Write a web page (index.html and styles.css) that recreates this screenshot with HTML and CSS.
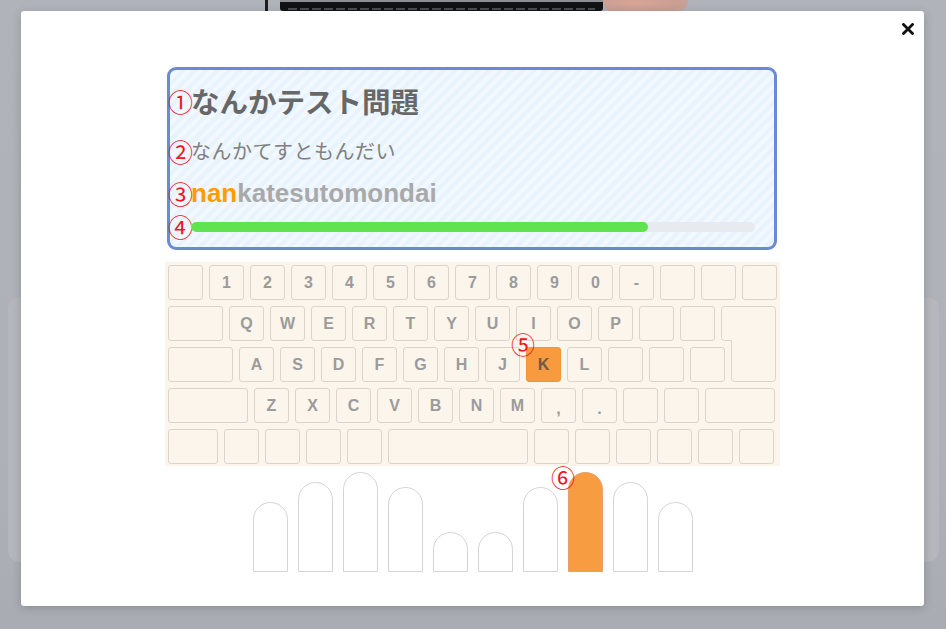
FILE: index.html
```html
<!DOCTYPE html>
<html lang="ja">
<head>
<meta charset="utf-8">
<title>Typing</title>
<link rel="stylesheet" href="styles.css">
</head>
<body>
<div class="page">
  <div class="bg-header">
    <div class="bg-bar"></div>
    <div class="bg-screen"><div class="bg-dashes"></div></div>
    <div class="bg-face"></div>
  </div>
  <div class="bg-card"></div>
</div>

<div class="modal">
  <button class="close" aria-label="close">
    <svg width="12" height="12" viewBox="0 0 12 12"><path d="M1.5 1.5 L10.5 10.5 M10.5 1.5 L1.5 10.5" stroke="#111" stroke-width="2.8" stroke-linecap="square"/></svg>
  </button>

  <div class="prompt">
    <div class="line line-title"><span class="num">①</span><span class="title">なんかテスト問題</span></div>
    <div class="line line-kana"><span class="num">②</span><span class="kana">なんかてすともんだい</span></div>
    <div class="line line-roma"><span class="num">③</span><span class="roma"><span class="done">nan</span>katesutomondai</span></div>
    <div class="line line-bar"><span class="num">④</span><div class="track"><div class="fill" style="width:81%"></div></div></div>
  </div>

  <div class="keyboard">
    <div class="row">
      <div class="key"></div>
      <div class="key">1</div><div class="key">2</div><div class="key">3</div><div class="key">4</div><div class="key">5</div>
      <div class="key">6</div><div class="key">7</div><div class="key">8</div><div class="key">9</div><div class="key">0</div>
      <div class="key">-</div><div class="key"></div><div class="key"></div><div class="key"></div>
    </div>
    <div class="row">
      <div class="key w55"></div>
      <div class="key">Q</div><div class="key">W</div><div class="key">E</div><div class="key">R</div><div class="key">T</div>
      <div class="key">Y</div><div class="key">U</div><div class="key">I</div><div class="key">O</div><div class="key">P</div>
      <div class="key"></div><div class="key"></div>
      <svg class="enter" width="55" height="76" viewBox="0 0 55 76"><path d="M3.5 0.5 H51.5 Q54.5 0.5 54.5 3.5 V72.5 Q54.5 75.5 51.5 75.5 H13.5 Q10.5 75.5 10.5 72.5 V34.5 H3.5 Q0.5 34.5 0.5 31.5 V3.5 Q0.5 0.5 3.5 0.5 Z" fill="#fcf5ec" stroke="#d9d4cd"/></svg>
    </div>
    <div class="row">
      <div class="key w65"></div>
      <div class="key">A</div><div class="key">S</div><div class="key">D</div><div class="key">F</div><div class="key">G</div>
      <div class="key">H</div><div class="key">J</div><div class="key active">K<span class="mark mark-key">⑤</span></div><div class="key">L</div>
      <div class="key"></div><div class="key"></div><div class="key"></div>
      <div class="spacer45"></div>
    </div>
    <div class="row">
      <div class="key w80"></div>
      <div class="key">Z</div><div class="key">X</div><div class="key">C</div><div class="key">V</div><div class="key">B</div>
      <div class="key">N</div><div class="key">M</div><div class="key punct">,</div><div class="key punct">.</div>
      <div class="key"></div><div class="key"></div><div class="key w70"></div>
    </div>
    <div class="row">
      <div class="key w50"></div>
      <div class="key"></div><div class="key"></div><div class="key"></div><div class="key"></div>
      <div class="key w140"></div>
      <div class="key"></div><div class="key"></div><div class="key"></div><div class="key"></div><div class="key"></div><div class="key"></div>
    </div>
  </div>

  <div class="hands">
    <div class="finger h70"></div>
    <div class="finger h90"></div>
    <div class="finger h100"></div>
    <div class="finger h85"></div>
    <div class="finger h40"></div>
    <div class="finger h40"></div>
    <div class="finger h85"></div>
    <div class="finger h100 active"><span class="mark mark-finger">⑥</span></div>
    <div class="finger h90"></div>
    <div class="finger h70"></div>
  </div>
</div>
</body>
</html>
```

FILE: styles.css
```css
* { box-sizing: border-box; }

html, body {
  margin: 0;
  padding: 0;
}

body {
  width: 946px;
  height: 629px;
  overflow: hidden;
  background: linear-gradient(180deg, #b0b3ba 0%, #aeb1b8 70%, #a9acb3 100%);
  font-family: "Noto Sans CJK JP", "Noto Sans", sans-serif;
  position: relative;
}

/* ---------- dimmed page behind the modal ---------- */
.page {
  display: flex;
  flex-direction: column;
}

.bg-header {
  display: flex;
  align-items: flex-start;
  height: 14px;
  margin-left: 265px;
}

.bg-bar {
  width: 3px;
  height: 12px;
  background: #1d1e22;
}

.bg-screen {
  margin-left: 12px;
  width: 323px;
  height: 11px;
  background: #111214;
  border-top: 2px solid #8d8f95;
  border-radius: 0 0 3px 3px;
  padding: 6px 8px 0;
}

.bg-dashes {
  height: 2px;
  background: repeating-linear-gradient(90deg, #4a4c52 0 9px, transparent 9px 12px);
}

.bg-face {
  width: 85px;
  height: 14px;
  border-radius: 0 0 40px 40px;
  background: radial-gradient(ellipse at 40% 20%, #d7a596 0%, #c99e93 60%, #b8aeb0 100%);
}

.bg-card {
  margin: 283px 7px 0 8px;
  height: 265px;
  border-radius: 12px;
  background: #b6b7bc;
}

/* ---------- modal ---------- */
.modal {
  position: absolute;
  left: 21px;
  top: 11px;
  width: 903px;
  height: 595px;
  background: #fff;
  border-radius: 3px;
  box-shadow: 0 2px 10px rgba(0, 0, 0, 0.18);
  display: flex;
  flex-direction: column;
  align-items: center;
  padding-top: 56px;
}

.close {
  position: absolute;
  right: 9px;
  top: 11px;
  width: 14px;
  height: 14px;
  padding: 1px;
  border: 0;
  background: transparent;
  display: flex;
  align-items: center;
  justify-content: center;
}

/* ---------- prompt box ---------- */
.prompt {
  width: 610px;
  height: 183px;
  margin-left: -1px;
  border: 3px solid #6a8ad2;
  border-radius: 9px;
  background-color: #ebf5fe;
  background-image: repeating-linear-gradient(135deg, #e8f3fe 0 4px, #f1f8ff 4px 8px);
  display: flex;
  flex-direction: column;
  padding-left: 1px;
}

.line {
  display: flex;
  align-items: center;
  height: 30px;
}

.line-title { margin-top: 16px; }
.line-kana { margin-top: 20px; }
.line-roma { margin-top: 12px; }
.line-bar { margin-top: 8px; height: 21px; padding-right: 19px; }

.num {
  display: inline-block;
  width: 23px;
  margin-left: -3px;
  flex: none;
  text-align: center;
  font-family: "Noto Sans CJK JP", sans-serif;
  font-size: 25px;
  line-height: 1;
  color: #f0141e;
}

.title {
  font-size: 28.5px;
  font-weight: 700;
  color: #676767;
  line-height: 1;
}

.kana {
  font-size: 20px;
  font-weight: 400;
  color: #808080;
  line-height: 1;
  letter-spacing: 0.5px;
}

.roma {
  font-family: "Liberation Sans", Arial, sans-serif;
  font-size: 26px;
  font-weight: 700;
  color: #a9a9a9;
  line-height: 1;
}

.roma .done { color: #ff9c00; }

.track {
  flex: 1;
  height: 10px;
  border-radius: 5px;
  background: #e7eaef;
  overflow: hidden;
}

.fill {
  height: 100%;
  border-radius: 5px;
  background: #5fe34f;
}

/* ---------- keyboard ---------- */
.keyboard {
  margin-top: 12px;
  width: 615px;
  height: 204px;
  padding: 3px 3px 0 3px;
  background: #fcf5ec;
  display: flex;
  flex-direction: column;
  gap: 6px;
}

.row {
  display: flex;
  gap: 6px;
  height: 35px;
  align-items: flex-start;
}

.key {
  position: relative;
  flex: none;
  width: 35px;
  height: 35px;
  border: 1px solid #d9d4cd;
  border-radius: 3px;
  background: #fcf5ec;
  display: flex;
  align-items: center;
  justify-content: center;
  font-family: "Liberation Sans", Arial, sans-serif;
  font-weight: 700;
  font-size: 16px;
  color: #9b9b9b;
}

.key.punct { padding-top: 6px; }

.key.w50 { width: 50px; }
.key.w55 { width: 55px; }
.key.w65 { width: 65px; }
.key.w70 { width: 70px; }
.key.w80 { width: 80px; }
.key.w140 { width: 140px; }

.key.active {
  background: #f79b3e;
  border-color: #f0953a;
  color: #6e5a48;
}

.enter {
  flex: none;
  display: block;
}

.spacer45 {
  width: 45px;
  flex: none;
}

.mark {
  position: absolute;
  font-family: "Noto Sans CJK JP", sans-serif;
  font-size: 24px;
  line-height: 1;
  color: #f0141e;
  font-weight: 400;
}

.mark-key {
  left: -16px;
  top: -16px;
}

.mark-finger {
  left: -18px;
  top: -8px;
}

/* ---------- fingers ---------- */
.hands {
  margin-top: 6px;
  display: flex;
  align-items: flex-end;
  gap: 10px;
  height: 100px;
  margin-left: 1px;
}

.finger {
  position: relative;
  width: 35px;
  border: 1px solid #d4d4d4;
  border-radius: 17.5px 17.5px 0 0;
  background: #fff;
}

.finger.active {
  background: #f79c41;
  border-color: #e3a06a;
}

.h40 { height: 40px; }
.h70 { height: 70px; }
.h85 { height: 85px; }
.h90 { height: 90px; }
.h100 { height: 100px; }
```
